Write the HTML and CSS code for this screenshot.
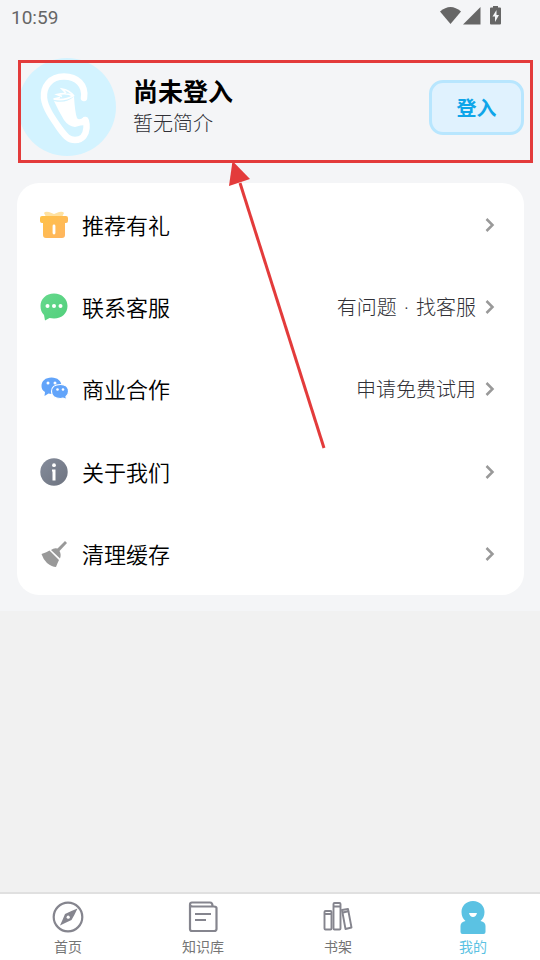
FILE: index.html
```html
<!DOCTYPE html>
<html lang="zh-CN">
<head>
<meta charset="utf-8">
<meta name="viewport" content="width=device-width, initial-scale=1">
<title>我的</title>
<link rel="stylesheet" href="styles.css">
</head>
<body>
<div class="app">
  <main class="main">
    <div class="status">
      <span class="clock">10:59</span>
      <svg class="status-icons" width="64" height="22" viewBox="0 0 64 22" fill="#666" aria-hidden="true">
        <path d="M0 5.500Q10.500-3.500 21 5.500L10.500 18Z"/>
        <path d="M23 18.500 40.500 1V18.500Z"/>
        <path d="M53 1.500V0h5v1.500h2q1 0 1 1V17.500q0 1-1 1h-9q-1 0-1-1V2.500q0-1 1-1Z"/>
        <path d="M56.500 4 52.500 10.500h2.500V16l4-7h-2.500Z" fill="#f4f5f7"/>
      </svg>
    </div>
    <header class="profile">
      <svg class="avatar" viewBox="0 0 98 98" aria-hidden="true">
        <circle cx="49" cy="49" r="49" fill="#d3f3ff"/>
        <path d="M66 40C68 27 59 18.500 46 18.500C32 18.500 25 29 26 40C27 50 35 61 42 71C48 79 51 82 57 82C65 82 68 76 68.500 70C69 66 68 64 67.500 62" fill="none" stroke="#fff" stroke-width="6.500" stroke-linecap="round"/>
        <path d="M36 43Q48 46 56 38.500Q57 55 59 60Q61 63 66 59Q71 61 69 67Q62 67 57 69Q50 68 46 62Q41 54 36 43Z" fill="#fff"/>
        <path d="M35.500 41Q47 43 55 38Q49 34 39 36.500L44 38.500M56 38Q51 32 44 31L48 35M35.500 41L42 39.500" fill="none" stroke="#fff" stroke-width="1.700"/>
      </svg>
      <div class="who">
        <h1 class="name">尚未登入</h1>
        <p class="bio">暂无简介</p>
      </div>
      <button class="login" type="button">登入</button>
      <div class="marker" aria-hidden="true"></div>
      <svg class="arrow" width="100" height="290" viewBox="0 0 100 290" aria-hidden="true">
        <path d="M11 22 95 287" stroke="#e33b3b" stroke-width="3"/>
        <path d="M3.500 0 21 18 0 25Z" fill="#e33b3b"/>
      </svg>
    </header>
    <nav class="card" aria-label="菜单">
      <a class="row" href="#gift">
        <svg class="icon" viewBox="0 0 30 30" aria-hidden="true">
          <defs><linearGradient id="gold" x1="0" y1="0" x2="1" y2="1"><stop offset="0" stop-color="#ffc247"/><stop offset="1" stop-color="#ffb461"/></linearGradient></defs>
          <path d="M5 3Q6 1 10 2L15 4 20 2Q24 1 25 3L23 7H7Z" fill="#ffe1a0"/>
          <path d="M3 6H27Q29 6 29 8V11Q29 13 27 13H26V25Q26 28 23 28H7Q4 28 4 25V13H3Q1 13 1 11V8Q1 6 3 6Z" fill="url(#gold)"/>
          <path d="M15 16V23" stroke="#fff" stroke-width="2.800" stroke-linecap="round"/>
        </svg>
        <span class="label">推荐有礼</span>
        <svg class="chevron" viewBox="0 0 10 16" aria-hidden="true"><path d="M1.500 2 7.500 8 1.500 14"/></svg>
      </a>
      <a class="row" href="#service">
        <svg class="icon" viewBox="0 0 30 30" aria-hidden="true">
          <defs><linearGradient id="green" x1="0" y1="0" x2="1" y2="1"><stop offset="0" stop-color="#66d98d"/><stop offset="1" stop-color="#51cf7b"/></linearGradient></defs>
          <path d="M15 1.500C23 1.500 28.500 7 28.500 14S23 26.500 15 26.500L10.500 26 6 28.500 5 23C2.500 20.500 1.500 17.500 1.500 14 1.500 7 7 1.500 15 1.500Z" fill="url(#green)"/>
          <g fill="#fff"><circle cx="8.500" cy="14" r="2"/><circle cx="15" cy="14" r="2"/><circle cx="21.500" cy="14" r="2"/></g>
        </svg>
        <span class="label">联系客服</span>
        <span class="hint">有问题<span class="dot"> · </span>找客服</span>
        <svg class="chevron" viewBox="0 0 10 16" aria-hidden="true"><path d="M1.500 2 7.500 8 1.500 14"/></svg>
      </a>
      <a class="row" href="#business">
        <svg class="icon" viewBox="0 0 30 30" aria-hidden="true">
          <path d="M12.500 3.500C18.500 3.500 22.500 7 22.500 12S18.500 20 12.500 20L9.500 19.500 5.500 22 6 18C3.500 16.500 2.500 14.500 2.500 12 2.500 7 6.500 3.500 12.500 3.500Z" fill="#62a4fa"/>
          <path d="M21.500 10.500C26.500 10.500 29.500 13.500 29.500 17.500 29.500 20 28.500 21.500 27 22.500L27.500 25.500 24 24 21.500 24.500C16 24.500 12.500 22 12.500 17.500S16 10.500 21.500 10.500Z" fill="#62a4fa" stroke="#fff" stroke-width="1.200"/>
          <g fill="#fff"><circle cx="9" cy="9" r="1.500"/><circle cx="16" cy="9" r="1.500"/><circle cx="18.500" cy="15.500" r="1.300"/><circle cx="24" cy="15.500" r="1.300"/></g>
        </svg>
        <span class="label">商业合作</span>
        <span class="hint">申请免费试用</span>
        <svg class="chevron" viewBox="0 0 10 16" aria-hidden="true"><path d="M1.500 2 7.500 8 1.500 14"/></svg>
      </a>
      <a class="row" href="#about">
        <svg class="icon" viewBox="0 0 30 30" aria-hidden="true">
          <defs><linearGradient id="slate" x1="0" y1="0" x2="1" y2="1"><stop offset="0" stop-color="#858c9b"/><stop offset="1" stop-color="#6e7480"/></linearGradient></defs>
          <circle cx="15" cy="15" r="13.700" fill="url(#slate)"/>
          <circle cx="15" cy="8.200" r="1.900" fill="#fff"/>
          <path d="M13 12.500H16.500V23.500H13.500V14.500H13Z" fill="#fff"/>
        </svg>
        <span class="label">关于我们</span>
        <svg class="chevron" viewBox="0 0 10 16" aria-hidden="true"><path d="M1.500 2 7.500 8 1.500 14"/></svg>
      </a>
      <a class="row" href="#cache">
        <svg class="icon" viewBox="0 0 30 30" fill="#999" aria-hidden="true">
          <path d="M2.500 15Q8 13 10.500 11.500L20 21Q18.500 24 17 28Q13 28 8 24Q4 20 2.500 15Z"/>
          <path d="M12 11Q15 8.500 18.500 9.500L26 2 28 4 20.500 12Q22.500 15.500 21 19.500Z"/>
        </svg>
        <span class="label">清理缓存</span>
        <svg class="chevron" viewBox="0 0 10 16" aria-hidden="true"><path d="M1.500 2 7.500 8 1.500 14"/></svg>
      </a>
    </nav>
  </main>
  <nav class="tabs" aria-label="主导航">
    <a class="tab" href="#home">
      <svg class="tab-icon" viewBox="0 0 34 34" aria-hidden="true">
        <circle cx="17" cy="17" r="14.300" fill="none" stroke="#85858e" stroke-width="2.200"/>
        <path d="M26.500 8.500Q23.500 15 20.500 20Q15 22.500 9 25.500Q12 19 14 14Q20 11 26.500 8.500Z" fill="#85858e"/>
        <circle cx="17.200" cy="17.200" r="1.600" fill="#fff"/>
      </svg>
      <span>首页</span>
    </a>
    <a class="tab" href="#library">
      <svg class="tab-icon" viewBox="0 0 34 34" fill="none" stroke="#85858e" stroke-width="2.200" aria-hidden="true">
        <path d="M4 5V29Q4 31 6 31H28Q30.500 31 30.500 29V8Q30.500 6.500 28 6.500H7Q4 6.500 4 4.500T6 2.500H24Q26.500 2.500 26.500 6M9 14H25M9 20H20"/>
      </svg>
      <span>知识库</span>
    </a>
    <a class="tab" href="#shelf">
      <svg class="tab-icon" viewBox="0 0 34 34" fill="none" stroke="#85858e" stroke-width="1.900" aria-hidden="true">
        <rect x="3.500" y="11" width="7" height="18.500" rx="1"/>
        <path d="M4 14H10M12.500 6.500H19M22 12.500 28 11"/>
        <rect x="12.500" y="3" width="7" height="26.500" rx="1"/>
        <path d="M21 10 27 9 30.500 27.500 24.500 29Z" stroke-linejoin="round"/>
      </svg>
      <span>书架</span>
    </a>
    <a class="tab active" href="#me" aria-current="page">
      <svg class="tab-icon" viewBox="0 0 34 34" aria-hidden="true">
        <path d="M17 1C24 1 28.500 6 28.500 12 28.500 16 27 19 24.500 21Q29.500 22 29.500 26V32Q29.500 34 27.500 34H6.500Q4.500 34 4.500 32V26Q4.500 22 9.500 21C7 19 5.500 16 5.500 12 5.500 6 10 1 17 1Z" fill="#5bc2e3"/>
        <path d="M13 13H21Q20 17 17 17T13 13Z" fill="#fff"/>
      </svg>
      <span>我的</span>
    </a>
  </nav>
</div>
</body>
</html>
```
FILE: styles.css
```css
* {
  box-sizing: border-box;
}

body {
  margin: 0;
  background: #f1f1f1;
  color: #000;
  font-family: "Noto Sans CJK SC", sans-serif;
}

a {
  color: inherit;
  text-decoration: none;
}

.app {
  display: flex;
  flex-direction: column;
  justify-content: space-between;
  min-height: 100vh;
}

.main {
  padding: 0 16px 16px 18px;
  background: #f4f5f7;
}

.status {
  display: flex;
  align-items: flex-start;
  justify-content: space-between;
  height: 58px;
  padding: 6px 20px 0 0;
}

.clock {
  margin-left: -7px;
  color: #666;
  font: 400 19px/24px Roboto, sans-serif;
}

.status-icons {
  flex: none;
}

.profile {
  position: relative;
  display: flex;
  align-items: center;
  margin-bottom: 27px;
}

.avatar {
  flex: none;
  width: 98px;
  height: 98px;
  margin-right: 17px;
}

.who {
  flex: 1;
}

.name,
.bio {
  margin: 0;
}

.name {
  font-size: 25px;
  font-weight: 700;
  line-height: 32px;
}

.bio {
  color: #303036;
  font-size: 20px;
  font-weight: 300;
  line-height: 34px;
}

.login {
  width: 95px;
  height: 55px;
  padding: 2px 0 0;
  border: 3px solid #b8e6fe;
  border-radius: 14px;
  background: #e0f2fe;
  color: #0ea5e9;
  font: 700 20px/30px "Noto Sans CJK SC", sans-serif;
}

.marker {
  position: absolute;
  inset: 2px -9px -7px 0;
  border: 3px solid #e33b3b;
}

.arrow {
  position: absolute;
  top: 103px;
  left: 211px;
  pointer-events: none;
}

.card {
  display: grid;
  grid-auto-rows: 1fr;
  min-height: 412px;
  margin-left: -1px;
  border-radius: 22px;
  background: #fff;
}

.row {
  display: flex;
  align-items: center;
  padding: 1px 27px 0 22px;
}

.icon {
  flex: none;
  width: 30px;
  height: 30px;
  margin-right: 13px;
}

.label {
  flex: 1;
  padding-bottom: 2px;
  font-size: 22px;
  font-weight: 350;
  line-height: 30px;
}

.hint {
  margin-right: 9px;
  color: #303036;
  font-size: 20px;
  font-weight: 300;
  line-height: 30px;
}

.dot {
  margin: 0 2px;
  font-family: "Open Sans", sans-serif;
  line-height: 1;
}

.chevron {
  flex: none;
  width: 10px;
  height: 16px;
  margin-right: 2px;
  fill: none;
  stroke: #999;
  stroke-width: 2.5;
}

.tabs {
  display: grid;
  grid-template-columns: repeat(4, 1fr);
  min-height: 68px;
  border-top: 2px solid #e0e0e0;
  background: #fff;
}

.tab {
  display: flex;
  flex-direction: column;
  align-items: center;
  gap: 2px;
  padding: 6px 0 0 1px;
  color: #757575;
  font-size: 14px;
  line-height: 20px;
}

.active {
  color: #5bc2e3;
}

.tab-icon {
  width: 34px;
  height: 34px;
}
```
